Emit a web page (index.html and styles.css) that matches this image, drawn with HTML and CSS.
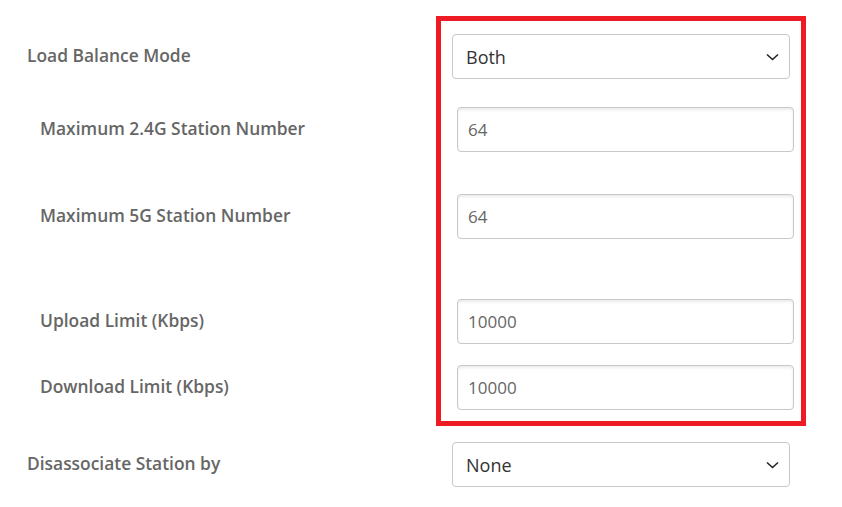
FILE: index.html
```html
<!DOCTYPE html>
<html lang="en">
<head>
    <meta charset="UTF-8">
    <meta name="viewport" content="width=device-width, initial-scale=1.0">
    <title>Load Balance</title>
    <link rel="stylesheet" href="styles.css">
</head>
<body>
    <div id="settings">
        <div class="group">
            <div class="labels">
                <div class="cell">
                    <label class="label" for="lb-mode">Load Balance Mode</label>
                </div>
                <div class="cell r2">
                    <label class="label sub" for="max24">Maximum 2.4G Station Number</label>
                </div>
                <div class="cell r3">
                    <label class="label sub" for="max5">Maximum 5G Station Number</label>
                </div>
                <div class="cell r4">
                    <label class="label sub" for="upload">Upload Limit (Kbps)</label>
                </div>
                <div class="cell r5">
                    <label class="label sub" for="download">Download Limit (Kbps)</label>
                </div>
            </div>
            <div class="highlight">
                <div class="cell">
                    <div class="select-wrap">
                        <select id="lb-mode" class="field-select">
                            <option>Both</option>
                            <option>2.4G</option>
                            <option>5G</option>
                        </select>
                        <svg class="chevron" width="13" height="8" viewBox="0 0 13 8">
                            <path d="M1 1.5 L6.5 6.5 L12 1.5" fill="none" stroke="#222" stroke-width="1.6"/>
                        </svg>
                    </div>
                </div>
                <div class="cell r2">
                    <input id="max24" class="field-input" type="text" value="64">
                </div>
                <div class="cell r3">
                    <input id="max5" class="field-input" type="text" value="64">
                </div>
                <div class="cell r4">
                    <input id="upload" class="field-input" type="text" value="10000">
                </div>
                <div class="cell r5">
                    <input id="download" class="field-input" type="text" value="10000">
                </div>
            </div>
        </div>
        <div class="row">
            <div class="label-col">
                <label class="label" for="disassoc">Disassociate Station by</label>
            </div>
            <div class="select-wrap">
                <select id="disassoc" class="field-select">
                    <option>None</option>
                    <option>RSSI</option>
                </select>
                <svg class="chevron" width="13" height="8" viewBox="0 0 13 8">
                    <path d="M1 1.5 L6.5 6.5 L12 1.5" fill="none" stroke="#222" stroke-width="1.6"/>
                </svg>
            </div>
        </div>
    </div>
</body>
</html>
```

FILE: styles.css
```css
body {
    margin: 0;
    padding: 0;
    background: #fff;
    font-family: "Open Sans", "Noto Sans", sans-serif;
}

#settings {
    padding-top: 16px;
}

.group {
    display: flex;
}

.labels {
    width: 436px;
    padding-top: 18px;
    display: flex;
    flex-direction: column;
}

.highlight {
    width: 360px;
    border: 5px solid #ed1c24;
    padding: 13px 0 11px 0;
    display: flex;
    flex-direction: column;
}

.cell {
    height: 45px;
    display: flex;
    align-items: center;
}

.r2 { margin-top: 28px; }
.r3 { margin-top: 42px; }
.r4 { margin-top: 60px; }
.r5 { margin-top: 21px; }

.label {
    font-size: 17.4px;
    font-weight: 600;
    color: #666;
    padding-left: 27px;
    margin-top: -4px;
}

.label.sub {
    padding-left: 40px;
}

.select-wrap {
    position: relative;
    width: 338px;
    height: 45px;
    margin-left: 11px;
}

.field-select {
    appearance: none;
    -webkit-appearance: none;
    width: 100%;
    height: 100%;
    box-sizing: border-box;
    border: 1px solid #c8c8c8;
    border-radius: 4px;
    background: #fff;
    padding: 0 0 0 13px;
    font-family: inherit;
    font-size: 18px;
    color: #333;
}

.chevron {
    position: absolute;
    right: 11px;
    top: 19px;
}

.field-input {
    width: 337px;
    height: 45px;
    margin-left: 16px;
    box-sizing: border-box;
    border: 1px solid #c8c8c8;
    border-radius: 4px;
    box-shadow: inset 0 2px 3px rgba(0, 0, 0, 0.08);
    padding: 0 0 0 10px;
    font-family: inherit;
    font-size: 17px;
    color: #666;
}

.row {
    display: flex;
    margin-top: 16px;
}

.row .label-col {
    width: 441px;
    height: 45px;
    display: flex;
    align-items: center;
}
```
